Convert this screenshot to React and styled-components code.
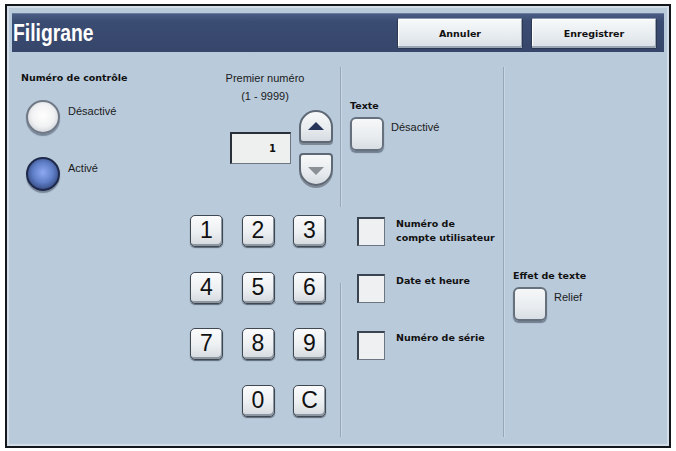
import React from "react";
import styled, { createGlobalStyle } from "styled-components";

const GlobalStyle = createGlobalStyle`
  html, body {
    margin: 0;
    padding: 0;
    background: #ffffff;
  }
  body {
    font-family: "Liberation Sans", Arial, sans-serif;
    color: #111;
  }
`;

const Frame = styled.div`
  box-sizing: border-box;
  margin: 4px 0 0 5px;
  width: 666px;
  height: 444px;
  border: 2px solid #14171c;
  background: #b9cadb;
  box-shadow: inset 0 0 0 2px #d3dde8;
  display: flex;
  flex-direction: column;
  padding: 7px 5px 2px 5px;
`;

const Header = styled.header`
  height: 39px;
  flex: none;
  display: flex;
  align-items: center;
  background: linear-gradient(#4a5c83, #3b4c72 20%, #36466b);
  border-top: 1px solid #6b7ca0;
  box-sizing: border-box;
  padding: 0 7px 0 1px;
`;

const Title = styled.h1`
  margin: 0;
  flex: 1;
  font-family: "Liberation Sans", Arial, sans-serif;
  font-weight: bold;
  font-size: 23px;
  color: #ffffff;
  transform: scaleX(0.84);
  transform-origin: left center;
`;

const HeaderButton = styled.button`
  width: 126px;
  height: 31px;
  margin-left: 8px;
  box-sizing: border-box;
  border: 1px solid #2c3852;
  border-top-color: #8a97b0;
  border-radius: 2px;
  background: linear-gradient(#f7f9fa, #e6ebef 60%, #d9e0e6);
  box-shadow: inset -1px -2px 0 #9aa6b3, inset 1px 1px 0 #ffffff;
  font-family: "DejaVu Sans", Verdana, sans-serif;
  font-weight: bold;
  font-size: 9.5px;
  color: #111;
  padding: 0;
`;

const Body = styled.main`
  flex: 1;
  display: flex;
  background: #b9cadb;
`;

const LeftArea = styled.div`
  width: 328px;
  display: flex;
  flex-direction: column;
`;

const TopRow = styled.div`
  height: 148px;
  display: flex;
`;

const ControlCol = styled.section`
  width: 158px;
  box-sizing: border-box;
  padding: 20px 0 0 9px;
  display: flex;
  flex-direction: column;
`;

const GroupLabel = styled.div`
  font-family: "DejaVu Sans", Verdana, sans-serif;
  font-weight: bold;
  font-size: 9.5px;
  line-height: 12px;
  color: #111;
  white-space: nowrap;
`;

const OptionText = styled.span`
  font-family: "Liberation Sans", Arial, sans-serif;
  font-size: 11px;
  line-height: 12px;
  color: #1a1a1a;
  padding-top: ${(p) => p.$offset || 5}px;
  white-space: nowrap;
`;

const RadioRow = styled.div`
  display: flex;
  align-items: flex-start;
  gap: 8px;
  margin-top: ${(p) => p.$top}px;
  padding-left: 5px;
`;

const Radio = styled.div`
  width: 34px;
  height: 34px;
  box-sizing: border-box;
  border-radius: 50%;
  border: 2px solid ${(p) => (p.$on ? "#1f2a4a" : "#6f7884")};
  background: ${(p) =>
    p.$on
      ? "radial-gradient(circle at 50% 45%, #8eaaf0 0%, #5f7fc8 45%, #34487e 80%, #22305a 100%)"
      : "radial-gradient(circle at 50% 45%, #ffffff 0%, #f1f2f3 50%, #c9ced4 85%, #9aa2ac 100%)"};
  box-shadow: 0 2px 1px rgba(40, 50, 70, 0.45);
`;

const NumberCol = styled.section`
  flex: 1;
  padding: 17px 0 0 20px;
  display: flex;
  flex-direction: column;
`;

const Caption = styled.div`
  text-align: center;
  font-family: "Liberation Sans", Arial, sans-serif;
  font-size: 11px;
  line-height: 18px;
  color: #1a1a1a;
`;

const SpinRow = styled.div`
  display: flex;
  align-items: center;
  gap: 8px;
  padding-left: 40px;
  margin-top: 5px;
`;

const ValueBox = styled.div`
  width: 61px;
  height: 32px;
  box-sizing: border-box;
  background: #eef0f0;
  border: 1px solid #6d7580;
  border-top: 2px solid #2a3039;
  border-left: 2px solid #2a3039;
  display: flex;
  align-items: center;
  justify-content: flex-end;
  padding-right: 14px;
  font-family: "DejaVu Sans", Verdana, sans-serif;
  font-weight: bold;
  font-size: 10px;
`;

const Stepper = styled.div`
  display: flex;
  flex-direction: column;
  gap: 10px;
`;

const StepButton = styled.button`
  width: 34px;
  height: 33px;
  padding: 0;
  box-sizing: border-box;
  border: 2px solid #5f6975;
  border-radius: ${(p) => (p.$down ? "4px 4px 17px 17px" : "17px 17px 4px 4px")};
  background: linear-gradient(#f7f8f9, #e7ebee 60%, #d5dbe1);
  box-shadow: 0 2px 0 #7f8995;
  display: flex;
  align-items: center;
  justify-content: center;
`;

const Arrow = styled.span`
  width: 0;
  height: 0;
  border-left: 8px solid transparent;
  border-right: 8px solid transparent;
  ${(p) =>
    p.$down
      ? "border-top: 8px solid #8b9097; margin-top: 2px;"
      : "border-bottom: 8px solid #26345a; margin-bottom: 2px;"}
`;

const Keypad = styled.div`
  display: grid;
  grid-template-columns: repeat(3, 33px);
  grid-auto-rows: 32px;
  column-gap: 18.5px;
  row-gap: 24.5px;
  padding: 15px 0 0 178px;
`;

const Key = styled.button`
  grid-column: ${(p) => p.$col || "auto"};
  width: 33px;
  height: 32px;
  padding: 0 0 1px 0;
  box-sizing: border-box;
  border: 1px solid #3f4751;
  border-radius: 5px;
  background: linear-gradient(#fbfbfc, #eceff1 55%, #d4d9de);
  box-shadow: inset -1px -2px 0 #8d97a2, 0 1px 1px rgba(30, 40, 55, 0.6);
  font-family: "Liberation Sans", Arial, sans-serif;
  font-size: 23px;
  line-height: 1;
  color: #111;
`;

const Rule = styled.div`
  width: 2px;
  flex: none;
  display: flex;
  flex-direction: column;
  padding-top: 15px;
`;

const RuleSegment = styled.div`
  height: ${(p) => p.$h}px;
  margin-top: ${(p) => p.$gap || 0}px;
  border-left: 1px solid #97a7b9;
  border-right: 1px solid #c8d5e2;
`;

const MidCol = styled.section`
  width: 161px;
  box-sizing: border-box;
  padding: 48px 0 0 8px;
  display: flex;
  flex-direction: column;
`;

const RightCol = styled.section`
  flex: 1;
  padding: 218px 0 0 8px;
  display: flex;
  flex-direction: column;
`;

const ToggleRow = styled.div`
  display: flex;
  align-items: flex-start;
  gap: 7px;
  margin-top: 5px;
`;

const ToggleButton = styled.div`
  width: 34px;
  height: 34px;
  box-sizing: border-box;
  border: 2px solid #66717e;
  border-radius: 6px;
  background: linear-gradient(#f6f7f8, #e8ecef 60%, #d8dee3);
  box-shadow: 0 2px 1px rgba(40, 50, 70, 0.5);
`;

const CheckList = styled.div`
  display: flex;
  flex-direction: column;
  gap: 28px;
  margin-top: 66px;
  padding-left: 7px;
`;

const CheckRow = styled.div`
  display: flex;
  align-items: flex-start;
  gap: 11px;
`;

const CheckBox = styled.div`
  width: 28px;
  height: 29px;
  box-sizing: border-box;
  flex: none;
  background: #eef0f1;
  border: 1px solid #6c7682;
  border-top: 2px solid #3a4451;
  border-left: 2px solid #3a4451;
`;

const CheckLabel = styled.div`
  font-family: "DejaVu Sans", Verdana, sans-serif;
  font-weight: bold;
  font-size: 9.5px;
  line-height: 14px;
  color: #111;
`;

const keys = ["1", "2", "3", "4", "5", "6", "7", "8", "9"];

export default function App() {
  return (
    <>
      <GlobalStyle />
      <Frame>
        <Header>
          <Title>Filigrane</Title>
          <HeaderButton>Annuler</HeaderButton>
          <HeaderButton>Enregistrer</HeaderButton>
        </Header>
        <Body>
          <LeftArea>
            <TopRow>
              <ControlCol>
                <GroupLabel>Numéro de contrôle</GroupLabel>
                <RadioRow $top={16}>
                  <Radio />
                  <OptionText>Désactivé</OptionText>
                </RadioRow>
                <RadioRow $top={23}>
                  <Radio $on />
                  <OptionText>Activé</OptionText>
                </RadioRow>
              </ControlCol>
              <NumberCol>
                <Caption>
                  Premier numéro
                  <br />
                  (1 - 9999)
                </Caption>
                <SpinRow>
                  <ValueBox>1</ValueBox>
                  <Stepper>
                    <StepButton>
                      <Arrow />
                    </StepButton>
                    <StepButton $down>
                      <Arrow $down />
                    </StepButton>
                  </Stepper>
                </SpinRow>
              </NumberCol>
            </TopRow>
            <Keypad>
              {keys.map((k) => (
                <Key key={k}>{k}</Key>
              ))}
              <Key $col={2}>0</Key>
              <Key>C</Key>
            </Keypad>
          </LeftArea>

          <Rule>
            <RuleSegment $h={140} />
            <RuleSegment $h={154} $gap={76} />
          </Rule>

          <MidCol>
            <GroupLabel>Texte</GroupLabel>
            <ToggleRow>
              <ToggleButton />
              <OptionText $offset={4}>Désactivé</OptionText>
            </ToggleRow>
            <CheckList>
              <CheckRow>
                <CheckBox />
                <CheckLabel>
                  Numéro de
                  <br />
                  compte utilisateur
                </CheckLabel>
              </CheckRow>
              <CheckRow>
                <CheckBox />
                <CheckLabel>Date et heure</CheckLabel>
              </CheckRow>
              <CheckRow>
                <CheckBox />
                <CheckLabel>Numéro de série</CheckLabel>
              </CheckRow>
            </CheckList>
          </MidCol>

          <Rule>
            <RuleSegment $h={370} />
          </Rule>

          <RightCol>
            <GroupLabel>Effet de texte</GroupLabel>
            <ToggleRow>
              <ToggleButton />
              <OptionText $offset={4}>Relief</OptionText>
            </ToggleRow>
          </RightCol>
        </Body>
      </Frame>
    </>
  );
}
